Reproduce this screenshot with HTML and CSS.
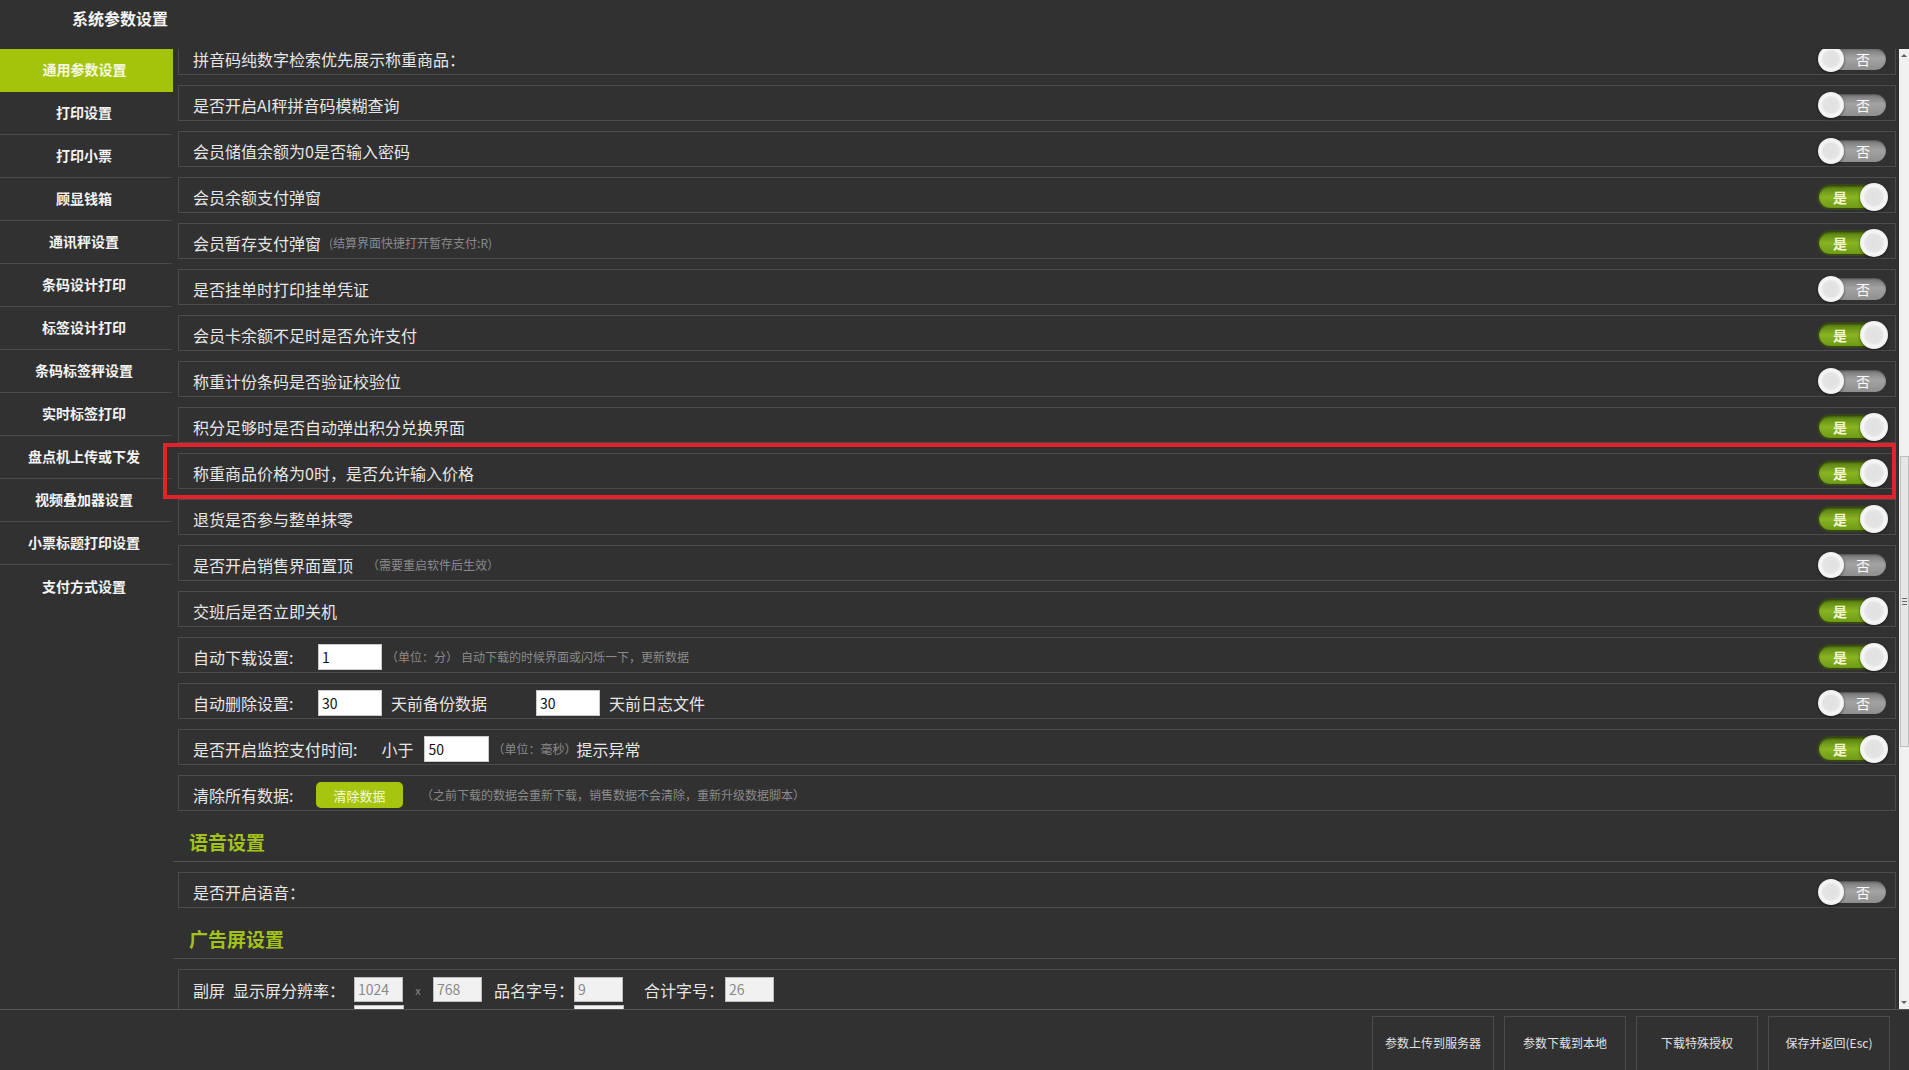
FILE: index.html
```html
<!DOCTYPE html>
<html lang="zh-CN">
<head>
<meta charset="utf-8">
<title>系统参数设置</title>
<link rel="stylesheet" href="styles.css">
</head>
<body>
<div class="app">
  <header class="topbar"><h1 class="title">系统参数设置</h1></header>
  <div class="middle">
    <nav class="sidebar">
      <div class="nav-item active">通用参数设置</div>
      <div class="nav-item">打印设置</div>
      <div class="nav-item">打印小票</div>
      <div class="nav-item">顾显钱箱</div>
      <div class="nav-item">通讯秤设置</div>
      <div class="nav-item">条码设计打印</div>
      <div class="nav-item">标签设计打印</div>
      <div class="nav-item">条码标签秤设置</div>
      <div class="nav-item">实时标签打印</div>
      <div class="nav-item">盘点机上传或下发</div>
      <div class="nav-item">视频叠加器设置</div>
      <div class="nav-item">小票标题打印设置</div>
      <div class="nav-item last">支付方式设置</div>
    </nav>
    <main class="content">
      <div class="scroll">
        <div class="scroll-inner">
          <div class="row"><span class="label">拼音码纯数字检索优先展示称重商品：</span><span class="sw off"><i class="knob"></i><b>否</b></span></div>
          <div class="row"><span class="label">是否开启AI秤拼音码模糊查询</span><span class="sw off"><i class="knob"></i><b>否</b></span></div>
          <div class="row"><span class="label">会员储值余额为0是否输入密码</span><span class="sw off"><i class="knob"></i><b>否</b></span></div>
          <div class="row"><span class="label">会员余额支付弹窗</span><span class="sw on"><b>是</b><i class="knob"></i></span></div>
          <div class="row"><span class="label">会员暂存支付弹窗</span><span class="note n-tight">(结算界面快捷打开暂存支付:R)</span><span class="sw on"><b>是</b><i class="knob"></i></span></div>
          <div class="row"><span class="label">是否挂单时打印挂单凭证</span><span class="sw off"><i class="knob"></i><b>否</b></span></div>
          <div class="row"><span class="label">会员卡余额不足时是否允许支付</span><span class="sw on"><b>是</b><i class="knob"></i></span></div>
          <div class="row"><span class="label">称重计份条码是否验证校验位</span><span class="sw off"><i class="knob"></i><b>否</b></span></div>
          <div class="row"><span class="label">积分足够时是否自动弹出积分兑换界面</span><span class="sw on"><b>是</b><i class="knob"></i></span></div>
          <div class="row"><span class="label">称重商品价格为0时，是否允许输入价格</span><span class="sw on"><b>是</b><i class="knob"></i></span></div>
          <div class="row"><span class="label">退货是否参与整单抹零</span><span class="sw on"><b>是</b><i class="knob"></i></span></div>
          <div class="row"><span class="label">是否开启销售界面置顶</span><span class="note n-wide">（需要重启软件后生效）</span><span class="sw off"><i class="knob"></i><b>否</b></span></div>
          <div class="row"><span class="label">交班后是否立即关机</span><span class="sw on"><b>是</b><i class="knob"></i></span></div>
          <div class="row">
            <span class="label fixed">自动下载设置:</span>
            <span class="input">1</span>
            <span class="note n-after">（单位：分）</span>
            <span class="note n-gap">自动下载的时候界面或闪烁一下，更新数据</span>
            <span class="sw on"><b>是</b><i class="knob"></i></span>
          </div>
          <div class="row">
            <span class="label fixed">自动删除设置:</span>
            <span class="input">30</span>
            <span class="label t-after">天前备份数据</span>
            <span class="input i-second">30</span>
            <span class="label t-after">天前日志文件</span>
            <span class="sw off"><i class="knob"></i><b>否</b></span>
          </div>
          <div class="row">
            <span class="label">是否开启监控支付时间:</span>
            <span class="label t-small">小于</span>
            <span class="input i-short">50</span>
            <span class="note n-ms">（单位：毫秒）</span>
            <span class="label t-tip">提示异常</span>
            <span class="sw on"><b>是</b><i class="knob"></i></span>
          </div>
          <div class="row">
            <span class="label fixed">清除所有数据:</span>
            <span class="btn-green">清除数据</span>
            <span class="note n-clear">（之前下载的数据会重新下载，销售数据不会清除，重新升级数据脚本）</span>
          </div>
          <div class="section">语音设置</div>
          <div class="row"><span class="label">是否开启语音：</span><span class="sw off"><i class="knob"></i><b>否</b></span></div>
          <div class="section">广告屏设置</div>
          <div class="row multi">
            <div class="line">
              <span class="label">副屏</span>
              <span class="label t-res">显示屏分辨率：</span>
              <span class="input dis d-first">1024</span>
              <span class="times">x</span>
              <span class="input dis">768</span>
              <span class="label t-name">品名字号：</span>
              <span class="input dis d-name">9</span>
              <span class="label t-sum">合计字号：</span>
              <span class="input dis d-sum">26</span>
            </div>
            <div class="line line2">
              <span class="input blank l2a"></span>
              <span class="input blank l2b"></span>
            </div>
          </div>
        </div>
      </div>
      <div class="scrollbar">
        <span class="arrow up"></span>
        <span class="thumb"><i></i><i></i><i></i></span>
        <span class="arrow down"></span>
      </div>
    </main>
    <div class="highlight"></div>
  </div>
  <footer class="footer">
    <span class="fbtn">参数上传到服务器</span>
    <span class="fbtn">参数下载到本地</span>
    <span class="fbtn">下载特殊授权</span>
    <span class="fbtn">保存并返回(Esc)</span>
  </footer>
</div>
</body>
</html>
```

FILE: styles.css
```css
* { box-sizing: border-box; }
html, body { margin: 0; padding: 0; }
body {
  background: #313131;
  font-family: "Noto Sans CJK SC", "Microsoft YaHei", "Liberation Sans", sans-serif;
  color: #e8e8e8;
}
.app {
  width: 1909px;
  height: 1070px;
  display: flex;
  flex-direction: column;
  background: #313131;
  overflow: hidden;
}
.topbar {
  height: 49px;
  flex: none;
  padding: 8px 0 0 72px;
}
.title {
  margin: 0;
  font-size: 16px;
  line-height: 20px;
  font-weight: bold;
  color: #f4f4f4;
}
.middle {
  position: relative;
  height: 960px;
  flex: none;
  display: flex;
}
.sidebar {
  width: 173px;
  flex: none;
}
.nav-item {
  height: 43px;
  border-bottom: 1px solid #4a4a4a;
  margin-right: 1px;
  display: flex;
  align-items: center;
  justify-content: center;
  padding: 0 4px 2px 0;
  font-size: 14px;
  font-weight: bold;
  color: #f3f3f3;
}
.nav-item.active {
  background: #a4c40c;
  border-bottom-color: #a4c40c;
  color: #f6f8e4;
  margin-right: 0;
}
.nav-item.last { border-bottom: none; }

.content {
  flex: 1;
  display: flex;
  min-width: 0;
}
.scroll {
  flex: 1;
  overflow: hidden;
  min-width: 0;
}
.scroll-inner {
  margin-top: -10px;
  padding: 0 3px 0 5px;
  display: flex;
  flex-direction: column;
  gap: 10px;
}
.row {
  height: 36px;
  flex: none;
  border: 1px solid #4b4b4b;
  display: flex;
  align-items: center;
  padding: 4px 9px 0 14px;
}
.label {
  font-size: 16px;
  color: #e6e6e6;
  white-space: nowrap;
  line-height: 18px;
}
.label.fixed { width: 101px; }
.note {
  font-size: 12px;
  color: #8a8a8a;
  white-space: nowrap;
  line-height: 16px;
}
.n-tight { margin-left: 8px; }
.n-wide { margin-left: 14px; }
.n-after { margin-left: 4px; }
.n-ms { margin-left: 3px; }
.n-gap { margin-left: 3px; }
.n-clear { margin-left: 18px; }
.t-after { margin-left: 9px; }
.t-small { margin-left: 24px; }
.t-tip { margin-left: 0; }
.t-res { margin-left: 8px; width: 112px; }
.t-name { margin-left: 12px; width: 78px; }
.t-sum { margin-left: 21px; width: 78px; }
.input {
  width: 64px;
  height: 26px;
  margin-left: 24px;
  background: #ffffff;
  border: 1px solid #c9c9c9;
  color: #111;
  font-size: 14px;
  line-height: 24px;
  padding-left: 3px;
  flex: none;
}
.i-second { margin-left: 49px; }
.i-short { margin-left: 11px; width: 65px; }
.input.dis {
  width: 49px;
  height: 25px;
  margin-left: 0;
  background: #f1f1f1;
  border: 1px solid #bdbdbd;
  color: #8a8a8a;
  line-height: 23px;
}
.input.d-first { margin-left: 9px; }
.input.d-name { margin-left: 2px; }
.input.d-sum { margin-left: 3px; }
.input.blank {
  width: 50px;
  height: 25px;
  background: #f4f4f4;
  border: 1px solid #bdbdbd;
}
.input.l2a { margin-left: 161px; }
.input.l2b { margin-left: 170px; }
.times {
  width: 30px;
  text-align: center;
  font-size: 11px;
  color: #8a8a8a;
}
.btn-green {
  width: 87px;
  height: 26px;
  margin-left: 22px;
  background: #a5c50e;
  border-radius: 5px;
  color: #f5f8e0;
  font-size: 13px;
  display: flex;
  align-items: center;
  justify-content: center;
  flex: none;
}
.row.multi {
  height: auto;
  min-height: 80px;
  display: block;
  padding-top: 7px;
}
.line {
  display: flex;
  align-items: center;
  height: 25px;
}
.line2 { margin-top: 3px; }

.section {
  height: 41px;
  flex: none;
  margin-left: -5px;
  border-bottom: 1px solid #515151;
  display: flex;
  align-items: center;
  padding-left: 16px;
  font-size: 19px;
  font-weight: bold;
  color: #a2c21a;
}

/* toggle switch */
.sw {
  position: relative;
  margin-left: auto;
  width: 67px;
  height: 22px;
  border-radius: 11px;
  flex: none;
}
.sw b {
  position: absolute;
  top: 0;
  width: 20px;
  text-align: center;
  font-size: 14px;
  line-height: 22px;
  font-weight: normal;
}
.sw.off {
  background: linear-gradient(#767676, #a3a3a3 45%, #8f8f8f);
  box-shadow: inset 0 1px 2px rgba(0, 0, 0, .35);
}
.sw.off b { left: 34px; color: #fbfbfb; }
.sw.on {
  background: linear-gradient(#587f10, #88b423 50%, #6e9a17);
  box-shadow: 0 0 0 2px #384618, inset 0 1px 2px rgba(0, 0, 0, .3);
}
.sw.on b { left: 11px; color: #f4f7d4; font-weight: bold; }
.knob {
  position: absolute;
  border-radius: 50%;
  background: radial-gradient(circle at 50% 50%, #e1e1e1 0, #e4e4e4 42%, #f7f7f7 56%, #e8e8e8 78%, #c9c9c9 100%);
  box-shadow: 0 1px 3px rgba(0, 0, 0, .55);
}
.sw.off .knob { left: -1px; top: -2px; width: 26px; height: 26px; }
.sw.on .knob { right: -2px; top: -3px; width: 28px; height: 28px; }

/* scrollbar */
.scrollbar {
  width: 10px;
  flex: none;
  background: #f0f0f0;
  position: relative;
}
.arrow {
  position: absolute;
  left: 2px;
  width: 0;
  height: 0;
  border-left: 3px solid transparent;
  border-right: 3px solid transparent;
}
.arrow.up { top: 5px; border-bottom: 3px solid #606060; }
.arrow.down { bottom: 5px; border-top: 3px solid #606060; }
.thumb {
  position: absolute;
  left: 1px;
  right: 0;
  top: 407px;
  height: 291px;
  background: #e6e6e6;
  border: 1px solid #bfbfbf;
  display: flex;
  flex-direction: column;
  align-items: center;
  justify-content: center;
  gap: 2px;
}
.thumb i {
  display: block;
  width: 5px;
  height: 1px;
  background: #6a6a6a;
}

/* annotation overlay */
.highlight {
  position: absolute;
  left: 163px;
  top: 394px;
  width: 1733px;
  height: 56px;
  border: 4px solid #e2232b;
  pointer-events: none;
}

/* footer */
.footer {
  flex: 1;
  border-top: 1px solid #565656;
  display: flex;
  justify-content: flex-end;
  gap: 10px;
  padding: 6px 19px 0 0;
}
.fbtn {
  width: 122px;
  height: 56px;
  border: 1px solid #4c4c4c;
  border-bottom: none;
  display: flex;
  align-items: center;
  justify-content: center;
  padding-bottom: 4px;
  font-size: 12px;
  color: #e2e2e2;
}
```
